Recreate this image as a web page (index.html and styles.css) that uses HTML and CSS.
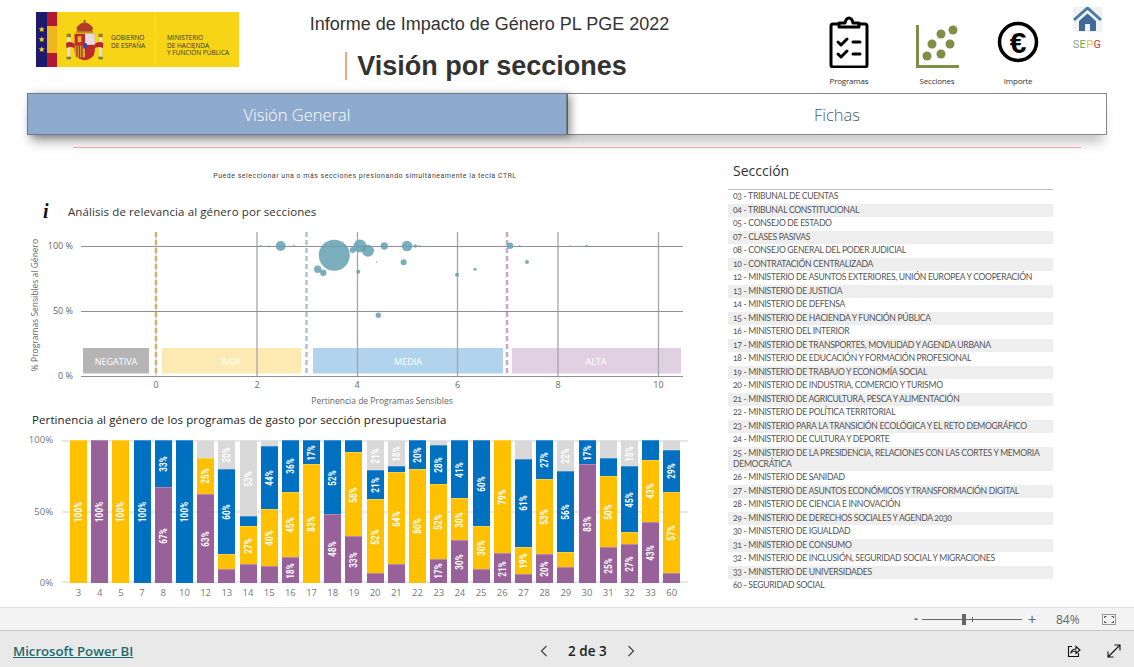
FILE: index.html
```html
<!DOCTYPE html>
<html lang="es">
<head>
    <meta charset="UTF-8">
    <title>Vision por secciones</title>
    <link rel="stylesheet" href="styles.css">
</head>
<body>
<div class="report">
    <header class="top">
        <div class="logo">
            <div class="logo-flag"><span class="star">★</span><span class="star">★</span><span class="star">★</span></div>
            <div class="logo-band"></div>
            <svg class="crest" viewBox="0 0 62 48" width="38" height="41" preserveAspectRatio="none">
                <rect x="2" y="20" width="5" height="24" fill="#ddd"/><rect x="1" y="16" width="7" height="4" fill="#9a7b22"/><rect x="1" y="43" width="7" height="3" fill="#6f7d3b"/>
                <rect x="54" y="20" width="5" height="24" fill="#ddd"/><rect x="53" y="16" width="7" height="4" fill="#9a7b22"/><rect x="53" y="43" width="7" height="3" fill="#6f7d3b"/>
                <path d="M0 27 q8 -3 14 1 l0 5 q-7 -3 -13 0z M61 27 q-8 -3 -14 1 l0 5 q7 -3 13 0z" fill="#b3262a"/>
                <path d="M17 9 q13 -12 27 0 l-2 5 h-23z" fill="#b5392b"/>
                <rect x="29" y="0" width="3" height="5" fill="#7d6a1e"/>
                <rect x="17" y="13" width="27" height="2" fill="#a6861f"/>
                <path d="M14 16 h33 v20 q-1 10 -16.500 11 q-15.500 -1 -16.500 -11z" fill="#c0282d"/>
                <rect x="31" y="16" width="16" height="13" fill="#e7dbe0"/>
                <rect x="15" y="30" width="16" height="14" fill="#d9a52a"/>
                <path d="M18 30 v13 M22 30 v15 M26 30 v15" stroke="#b3262a" stroke-width="2"/>
                <circle cx="31" cy="30" r="3.500" fill="#2a4f9e"/>
                <rect x="19" y="19" width="6" height="7" fill="#e2b736"/>
            </svg>
            <div class="logo-text gob">GOBIERNO<br>DE ESPAÑA</div>
            <div class="logo-text min">MINISTERIO<br>DE HACIENDA<br>Y FUNCIÓN PÚBLICA</div>
        </div>
        <div class="titles">
            <div class="title-sub">Informe de Impacto de Género PL PGE 2022</div>
            <h1 class="title-main">Visión por secciones</h1>
        </div>
        <nav class="nav">
            <div class="nav-item item-prog">
                <svg viewBox="0 0 40 52" width="40" height="52" fill="none" stroke="#000" stroke-width="3" stroke-linejoin="round" stroke-linecap="round">
                    <path d="M10 8 H4 Q2 8 2 10 V49 Q2 51 4 51 H36 Q38 51 38 49 V10 Q38 8 36 8 H30"/>
                    <path d="M10 11 V7 H16 Q17 2 20 2 Q23 2 24 7 H30 V11z"/>
                    <path d="M9 26 l3 3 l6 -6 M9 38 l3 3 l6 -6"/>
                    <path d="M24 26 H31 M24 38 H31"/>
                </svg>
                <span>Programas</span>
            </div>
            <div class="nav-item item-sec">
                <svg viewBox="0 0 44 52" width="44" height="52" fill="#7f8f47">
                    <path d="M1 9 H4 V49 H44 V52 H1z"/>
                    <circle cx="38" cy="14" r="4.500"/><circle cx="26" cy="18" r="4.500"/><circle cx="35" cy="28" r="4.500"/>
                    <circle cx="17" cy="28" r="4.500"/><circle cx="26" cy="38" r="4.500"/><circle cx="12" cy="40" r="4.500"/>
                </svg>
                <span>Secciones</span>
            </div>
            <div class="nav-item item-eur">
                <svg viewBox="0 0 44 52" width="44" height="52">
                    <circle cx="22" cy="26" r="18.500" fill="none" stroke="#000" stroke-width="3.500"/>
                    <text x="22" y="36.500" text-anchor="middle" class="euro">€</text>
                </svg>
                <span>Importe</span>
            </div>
            <div class="nav-item item-home">
                <svg viewBox="0 0 29 25" width="29" height="25">
                    <rect width="29" height="25" fill="#f1f1f1"/>
                    <path d="M1 13 L14.500 1 L28 13" fill="none" stroke="#4a7aa8" stroke-width="3"/>
                    <path d="M6 14 L14.500 6.500 L23 14 V24 H17 V17 H12 V24 H6z" fill="#3f6a9a"/>
                </svg>
                <span class="sepg"><i class="s">S</i><i class="e">E</i><i class="p">P</i><i class="g">G</i></span>
            </div>
        </nav>
    </header>

    <div class="tabs">
        <div class="tab tab-on">Visión General</div>
        <div class="tab">Fichas</div>
    </div>
    <div class="rule"></div>

    <main class="main">
        <section class="left">
            <p class="note">Puede seleccionar una o más secciones presionando simultáneamente la tecla CTRL</p>
            <div class="chart-title"><span class="info">i</span><span>Análisis de relevancia al género por secciones</span></div>

            <svg class="scatter" viewBox="20 225 670 185" width="670" height="185">
                <!-- bands -->
                <rect x="83" y="348" width="66" height="25.500" fill="#b5b5b5"/>
                <rect x="162" y="348" width="139" height="25.500" fill="#fdeab2"/>
                <rect x="313" y="348" width="190" height="25.500" fill="#b2d3ee"/>
                <rect x="512" y="348" width="169" height="25.500" fill="#e1d0e3"/>
                <!-- grid -->
                <g stroke="#a6a6a6" stroke-width="1.300">
                    <path d="M257 232V376M357.500 232V376M457.500 232V376M558 232V376M658.500 232V376"/>
                </g>
                <g stroke="#8f8f8f" stroke-width="1">
                    <path d="M81 246.500H683M81 311.500H683M81 376.500H683"/>
                </g>
                <path d="M156 232V376" stroke="#e7b84e" stroke-width="2.500" stroke-dasharray="5 3"/>
                <path d="M156 232V376" stroke="#a6a6a6" stroke-width="0.700"/>
                <path d="M306.500 232V376" stroke="#a9c0df" stroke-width="2.500" stroke-dasharray="5 3"/>
                <path d="M507 232V376" stroke="#c9a6cc" stroke-width="2.500" stroke-dasharray="5 3"/>
                <!-- bubbles -->
                <g fill="#64a0b0" fill-opacity="0.85">
                    <circle cx="261" cy="246" r="1"/><circle cx="269" cy="246" r="0.800"/><circle cx="280.700" cy="246" r="5"/><circle cx="294" cy="246" r="1"/>
                    <circle cx="334.300" cy="255.300" r="15.500"/><circle cx="317.700" cy="269.300" r="3.700"/><circle cx="323.300" cy="272.700" r="3.200"/>
                    <circle cx="352.700" cy="250" r="3"/><circle cx="358.300" cy="271.700" r="2"/><circle cx="360" cy="246" r="6.500"/><circle cx="368" cy="250.700" r="6"/>
                    <circle cx="384.300" cy="246" r="3.700"/><circle cx="407" cy="246" r="5.300"/><circle cx="415.300" cy="246" r="1.800"/><circle cx="419.300" cy="246" r="1"/>
                    <circle cx="376.700" cy="262" r="0.800"/><circle cx="403.700" cy="262.300" r="3"/><circle cx="457" cy="274.700" r="2"/><circle cx="475" cy="269.300" r="1.500"/>
                    <circle cx="378.300" cy="315.300" r="2.700"/><circle cx="510" cy="245.700" r="3.300"/><circle cx="519.700" cy="246" r="1"/><circle cx="527" cy="262" r="2"/>
                    <circle cx="570" cy="246" r="0.800"/><circle cx="586.700" cy="246" r="1.200"/>
                </g>
                <g class="band-label" text-anchor="middle">
                    <text x="116" y="365">NEGATIVA</text><text x="231" y="365">BAJA</text><text x="408" y="365">MEDIA</text><text x="596" y="365">ALTA</text>
                </g>
                <g class="axis-label" text-anchor="end">
                    <text x="73" y="249">100 %</text><text x="73" y="314">50 %</text><text x="73" y="379">0 %</text>
                </g>
                <g class="axis-label" text-anchor="middle">
                    <text x="156" y="388">0</text><text x="257" y="388">2</text><text x="357" y="388">4</text><text x="457.500" y="388">6</text><text x="558" y="388">8</text><text x="658.500" y="388">10</text>
                    <text class="axis-title" x="382" y="404">Pertinencia de Programas Sensibles</text>
                    <text class="axis-title" transform="translate(38 305) rotate(-90)">% Programas Sensibles al Género</text>
                </g>
            </svg>

            <div class="chart-title bars-title">Pertinencia al género de los programas de gasto por sección presupuestaria</div>
            <div class="bars-wrap">
                <div class="y-axis"><span>100%</span><span>50%</span><span>0%</span></div>
                <div>
                    <div class="plot">
                        <div class="bar"><div class="seg ye" style="height:100%"><span>100%</span></div></div>
                        <div class="bar"><div class="seg pu" style="height:100%"><span>100%</span></div></div>
                        <div class="bar"><div class="seg ye" style="height:100%"><span>100%</span></div></div>
                        <div class="bar"><div class="seg bl" style="height:100%"><span>100%</span></div></div>
                        <div class="bar"><div class="seg pu" style="height:67%"><span>67%</span></div><div class="seg bl" style="height:33%"><span>33%</span></div></div>
                        <div class="bar"><div class="seg bl" style="height:100%"><span>100%</span></div></div>
                        <div class="bar"><div class="seg pu" style="height:62.500%"><span>63%</span></div><div class="seg ye" style="height:25%"><span>25%</span></div><div class="seg gr" style="height:12.500%"></div></div>
                        <div class="bar"><div class="seg pu" style="height:10%"></div><div class="seg ye" style="height:10%"></div><div class="seg bl" style="height:60%"><span>60%</span></div><div class="seg gr" style="height:20%"><span>20%</span></div></div>
                        <div class="bar"><div class="seg pu" style="height:13%"></div><div class="seg ye" style="height:27%"><span>27%</span></div><div class="seg bl" style="height:7%"></div><div class="seg gr" style="height:53%"><span>53%</span></div></div>
                        <div class="bar"><div class="seg pu" style="height:12%"></div><div class="seg ye" style="height:40%"><span>40%</span></div><div class="seg bl" style="height:44%"><span>44%</span></div><div class="seg gr" style="height:4%"></div></div>
                        <div class="bar"><div class="seg pu" style="height:18%"><span>18%</span></div><div class="seg ye" style="height:46%"><span>45%</span></div><div class="seg bl" style="height:36%"><span>36%</span></div></div>
                        <div class="bar"><div class="seg ye" style="height:83%"><span>83%</span></div><div class="seg bl" style="height:17%"><span>17%</span></div></div>
                        <div class="bar"><div class="seg pu" style="height:48%"><span>48%</span></div><div class="seg bl" style="height:52%"><span>52%</span></div></div>
                        <div class="bar"><div class="seg pu" style="height:33%"><span>33%</span></div><div class="seg ye" style="height:58.500%"><span>58%</span></div><div class="seg bl" style="height:8.500%"></div></div>
                        <div class="bar"><div class="seg pu" style="height:7%"></div><div class="seg ye" style="height:51.500%"><span>52%</span></div><div class="seg bl" style="height:20.500%"><span>21%</span></div><div class="seg gr" style="height:21%"><span>21%</span></div></div>
                        <div class="bar"><div class="seg pu" style="height:13.500%"></div><div class="seg ye" style="height:64%"><span>64%</span></div><div class="seg bl" style="height:4.500%"></div><div class="seg gr" style="height:18%"><span>18%</span></div></div>
                        <div class="bar"><div class="seg ye" style="height:80%"><span>80%</span></div><div class="seg bl" style="height:20%"><span>20%</span></div></div>
                        <div class="bar"><div class="seg pu" style="height:17%"><span>17%</span></div><div class="seg ye" style="height:52%"><span>52%</span></div><div class="seg bl" style="height:27.500%"><span>28%</span></div><div class="seg gr" style="height:3.500%"></div></div>
                        <div class="bar"><div class="seg pu" style="height:30%"><span>30%</span></div><div class="seg ye" style="height:29.500%"><span>30%</span></div><div class="seg bl" style="height:40.500%"><span>41%</span></div></div>
                        <div class="bar"><div class="seg pu" style="height:10%"></div><div class="seg ye" style="height:30%"><span>30%</span></div><div class="seg bl" style="height:60%"><span>60%</span></div></div>
                        <div class="bar"><div class="seg pu" style="height:21%"><span>21%</span></div><div class="seg ye" style="height:79%"><span>79%</span></div></div>
                        <div class="bar"><div class="seg pu" style="height:6%"></div><div class="seg ye" style="height:19.500%"><span>19%</span></div><div class="seg bl" style="height:61.500%"><span>61%</span></div><div class="seg gr" style="height:13%"></div></div>
                        <div class="bar"><div class="seg pu" style="height:20%"><span>20%</span></div><div class="seg ye" style="height:53%"><span>53%</span></div><div class="seg bl" style="height:27%"><span>27%</span></div></div>
                        <div class="bar"><div class="seg pu" style="height:11%"></div><div class="seg ye" style="height:11%"></div><div class="seg bl" style="height:56%"><span>56%</span></div><div class="seg gr" style="height:22%"><span>22%</span></div></div>
                        <div class="bar"><div class="seg pu" style="height:83%"><span>83%</span></div><div class="seg bl" style="height:17%"><span>17%</span></div></div>
                        <div class="bar"><div class="seg pu" style="height:25%"><span>25%</span></div><div class="seg ye" style="height:50%"><span>50%</span></div><div class="seg bl" style="height:12.500%"></div><div class="seg gr" style="height:12.500%"></div></div>
                        <div class="bar"><div class="seg pu" style="height:27%"><span>27%</span></div><div class="seg ye" style="height:9%"></div><div class="seg bl" style="height:45.500%"><span>45%</span></div><div class="seg gr" style="height:18.500%"><span>18%</span></div></div>
                        <div class="bar"><div class="seg pu" style="height:43%"><span>43%</span></div><div class="seg ye" style="height:43%"><span>43%</span></div><div class="seg bl" style="height:14%"></div></div>
                        <div class="bar"><div class="seg pu" style="height:7%"></div><div class="seg ye" style="height:57%"><span>57%</span></div><div class="seg bl" style="height:29%"><span>29%</span></div><div class="seg gr" style="height:7%"></div></div>
                    </div>
                    <div class="x-axis">
                        <span>3</span><span>4</span><span>5</span><span>7</span><span>8</span><span>10</span><span>12</span><span>13</span><span>14</span><span>15</span><span>16</span><span>17</span><span>18</span><span>19</span><span>20</span><span>21</span><span>22</span><span>23</span><span>24</span><span>25</span><span>26</span><span>27</span><span>28</span><span>29</span><span>30</span><span>31</span><span>32</span><span>33</span><span>60</span>
                    </div>
                </div>
            </div>
        </section>

        <aside class="slicer">
            <h2>Seccción</h2>
            <ul class="list">
                <li>03 - TRIBUNAL DE CUENTAS</li>
                <li>04 - TRIBUNAL CONSTITUCIONAL</li>
                <li>05 - CONSEJO DE ESTADO</li>
                <li>07 - CLASES PASIVAS</li>
                <li>08 - CONSEJO GENERAL DEL PODER JUDICIAL</li>
                <li>10 - CONTRATACIÓN CENTRALIZADA</li>
                <li>12 - MINISTERIO DE ASUNTOS EXTERIORES, UNIÓN EUROPEA Y COOPERACIÓN</li>
                <li>13 - MINISTERIO DE JUSTICIA</li>
                <li>14 - MINISTERIO DE DEFENSA</li>
                <li>15 - MINISTERIO DE HACIENDA Y FUNCIÓN PÚBLICA</li>
                <li>16 - MINISTERIO DEL INTERIOR</li>
                <li>17 - MINISTERIO DE TRANSPORTES, MOVILIDAD Y AGENDA URBANA</li>
                <li>18 - MINISTERIO DE EDUCACIÓN Y FORMACIÓN PROFESIONAL</li>
                <li>19 - MINISTERIO DE TRABAJO Y ECONOMÍA SOCIAL</li>
                <li>20 - MINISTERIO DE INDUSTRIA, COMERCIO Y TURISMO</li>
                <li>21 - MINISTERIO DE AGRICULTURA, PESCA Y ALIMENTACIÓN</li>
                <li>22 - MINISTERIO DE POLÍTICA TERRITORIAL</li>
                <li>23 - MINISTERIO PARA LA TRANSICIÓN ECOLÓGICA Y EL RETO DEMOGRÁFICO</li>
                <li>24 - MINISTERIO DE CULTURA Y DEPORTE</li>
                <li>25 - MINISTERIO DE LA PRESIDENCIA, RELACIONES CON LAS CORTES Y MEMORIA DEMOCRÁTICA</li>
                <li>26 - MINISTERIO DE SANIDAD</li>
                <li>27 - MINISTERIO DE ASUNTOS ECONÓMICOS Y TRANSFORMACIÓN DIGITAL</li>
                <li>28 - MINISTERIO DE CIENCIA E INNOVACIÓN</li>
                <li>29 - MINISTERIO DE DERECHOS SOCIALES Y AGENDA 2030</li>
                <li>30 - MINISTERIO DE IGUALDAD</li>
                <li>31 - MINISTERIO DE CONSUMO</li>
                <li>32 - MINISTERIO DE INCLUSIÓN, SEGURIDAD SOCIAL Y MIGRACIONES</li>
                <li>33 - MINISTERIO DE UNIVERSIDADES</li>
                <li>60 - SEGURIDAD SOCIAL</li>
            </ul>
        </aside>
    </main>
</div>

<div class="status">
    <span class="zoom-sign">-</span>
    <div class="slider"><i class="thumb"></i><i class="tick"></i></div>
    <span class="zoom-sign plus">+</span>
    <span class="zoom-val">84%</span>
    <svg class="fit" viewBox="0 0 14 11" width="14" height="11" fill="none" stroke="#555">
        <rect x="0.500" y="0.500" width="13" height="10" stroke="#999"/>
        <path d="M2.500 4V2.500H4.500M9.500 2.500H11.500V4M11.500 7V8.500H9.500M4.500 8.500H2.500V7"/>
    </svg>
</div>

<footer class="footer">
    <a class="pbi">Microsoft Power BI</a>
    <div class="pager">
        <svg viewBox="0 0 8 12" width="8" height="12" fill="none" stroke="#444" stroke-width="1.200"><path d="M6.500 1L1.500 6L6.500 11"/></svg>
        <span>2 de 3</span>
        <svg viewBox="0 0 8 12" width="8" height="12" fill="none" stroke="#444" stroke-width="1.200"><path d="M1.500 1L6.500 6L1.500 11"/></svg>
    </div>
    <div class="actions">
        <svg viewBox="0 0 14 14" width="14" height="14" fill="none" stroke="#111" stroke-width="1.100">
            <path d="M5 2.500H1.500V12.500H11.500V9"/>
            <path d="M4 8.500Q5 5 9 5V2.500L13 6L9 9.500V7Q6 7 4 8.500z"/>
        </svg>
        <svg viewBox="0 0 14 14" width="14" height="14" fill="none" stroke="#111" stroke-width="1.100">
            <path d="M1 13L13 1M7.500 1H13V6.500M1 7.500V13H6.500"/>
        </svg>
    </div>
</footer>
</body>
</html>
```
FILE: styles.css
```css
* { box-sizing: border-box; }
html, body { margin: 0; height: 667px; overflow: hidden; background: #fff; }
body { width: 1134px; font-family: "Open Sans", sans-serif; color: #333; }

.report { height: 607px; overflow: hidden; }

/* header */
.top { display: flex; height: 93px; }
.logo {
    display: flex;
    width: 203px;
    height: 55px;
    margin: 12px 0 0 36px;
    background: #f8d416;
    flex: none;
}
.logo-flag {
    width: 11px;
    background: #1c1a6e;
    display: flex;
    flex-direction: column;
    align-items: center;
    justify-content: center;
    gap: 1px;
}
.star { color: #f8d416; font-size: 8px; line-height: 9px; font-family: "DejaVu Sans", sans-serif; }
.logo-band { width: 10px; background: linear-gradient(#b4182f 25%, #eeb51e 25%, #eeb51e 75%, #b4182f 75%); }
.crest { margin: 8px 0 0 9px; flex: none; }
.logo-text { font-family: "Open Sans", sans-serif; font-size: 6.5px; line-height: 7.500px; color: #333; }
.gob { padding-top: 22px; margin-left: 7px; width: 44px; }
.min { padding: 22px 0 0 11px; border-left: 1px solid #f5dc55; white-space: nowrap; }

.titles { width: 501px; flex: none; text-align: center; font-family: "Liberation Sans", sans-serif; }
.title-sub { font-size: 18px; line-height: 20px; margin-top: 14px; color: #333; }
.title-main {
    display: inline-block;
    margin: 18px 0 0 -7px;
    padding-left: 10px;
    border-left: 2px solid #f4a47a;
    font-size: 27px;
    line-height: 28px;
    font-weight: bold;
    color: #333;
}

.nav { display: flex; margin-left: 79px; }
.nav-item { width: 60px; display: flex; flex-direction: column; align-items: center; padding-top: 16px; font-size: 8px; color: #333; }
.nav-item span { margin-top: 7px; line-height: 12px; white-space: nowrap; letter-spacing: -0.2px; }
.item-sec { margin-left: 28px; }
.item-eur { margin-left: 21px; }
.item-home { margin-left: 9px; padding-top: 7px; }
.euro { font: bold 30px "Liberation Sans", sans-serif; fill: #000; }
.item-home .sepg { margin-top: 7px; font-size: 11px; letter-spacing: 0.3px; font-family: "Roboto", sans-serif; }
.sepg i { font-style: normal; }
.sepg .s { color: #999; }
.sepg .e { color: #5bb04c; }
.sepg .p { color: #e3c23a; }
.sepg .g { color: #c9363c; }

/* tabs */
.tabs {
    display: flex;
    width: 1080px;
    height: 42px;
    margin-left: 27px;
    box-shadow: 0 12px 12px -4px rgba(0, 0, 0, 0.22);
}
.tab {
    flex: 1;
    display: flex;
    align-items: center;
    justify-content: center;
    padding-top: 1px;
    background: #fff;
    border: 1px solid #888;
    font-size: 16.500px;
    font-weight: 300;
    color: #4a5a75;
}
.tab-on {
    background: #8eaace;
    color: #fff;
    border-color: #6d7a8a;
    box-shadow: 4px 2px 8px rgba(0, 0, 0, 0.4);
    position: relative;
}
.rule { height: 1px; margin: 12px 53px 0 73px; background: #f0a8a8; position: relative; }

/* main */
.main { display: flex; height: 458px; }
.left { width: 708px; flex: none; padding-left: 20px; }
.note { margin: 22px 0 0; width: 690px; text-align: center; font-size: 7px; line-height: 12px; color: #444; font-family: "Roboto", sans-serif; letter-spacing: 0.5px; }
.chart-title { display: flex; align-items: center; font-size: 11.500px; color: #333; letter-spacing: 0.1px; }
.chart-title { height: 20px; margin: 20px 0 0 23px; padding-bottom: 2px; }
.info { width: 25px; font: italic bold 20px "Liberation Serif", serif; color: #111; }
.scatter { display: block; margin-top: 3px; }
.axis-label { font-size: 9px; fill: #666; }
.axis-title { font-size: 8.500px; }
.band-label { font-size: 9px; fill: #fff; }

.bars-title { margin: 0 0 0 12px; height: 20px; color: #222; }
.bars-wrap { display: flex; margin-top: 10px; }
.y-axis {
    width: 33px;
    height: 155px;
    margin: -6px 9px 0 0;
    display: flex;
    flex-direction: column;
    justify-content: space-between;
    align-items: flex-end;
    font-size: 9.500px;
    line-height: 12px;
    color: #777;
}
.plot {
    display: flex;
    gap: 4.190px;
    width: 626px;
    height: 143px;
    padding-left: 8px;
    background:
        linear-gradient(#e8e8e8, #e8e8e8) 0 0 / 100% 2px no-repeat,
        linear-gradient(#e8e8e8, #e8e8e8) 0 50% / 100% 2px no-repeat,
        linear-gradient(#e8e8e8, #e8e8e8) 0 100% / 100% 2px no-repeat;
}
.bar { width: 17px; height: 100%; flex: none; display: flex; flex-direction: column-reverse; }
.seg {
    display: flex;
    align-items: center;
    justify-content: center;
    border-top: 1px solid rgba(255, 255, 255, 0.25);
    overflow: hidden;
}
/* the labels are a narrow font in the original, so squeeze them along the text */
.seg span {
    writing-mode: vertical-rl;
    transform: rotate(180deg) scaleY(0.8);
    font-family: "Roboto", sans-serif;
    font-size: 10px;
    font-weight: 700;
    color: #fff;
    white-space: nowrap;
    letter-spacing: 0.3px;
}
.ye { background: #ffc000; }
.pu { background: #996199; }
.bl { background: #0070c0; }
.gr { background: #d9d9d9; }
.x-axis { display: flex; gap: 4.190px; padding: 3px 0 0 8px; font-size: 9.500px; line-height: 13px; color: #777; }
.x-axis span { width: 17px; flex: none; text-align: center; }

/* slicer */
.slicer { width: 325px; margin-left: 20px; }
.slicer h2 { margin: 14px 0 0 5px; height: 27px; font-size: 14px; line-height: 18px; font-weight: 400; color: #333; }
.list { margin: 0; padding: 0; list-style: none; border-top: 1px solid #bbb; font-family: "Lato", sans-serif; font-size: 8.600px; line-height: 11px; letter-spacing: -0.3px; color: #555; font-variant-numeric: oldstyle-nums; }
.list li { padding: 1.250px 5px; }
.list li:nth-child(even) { background: #eeeeee; }

/* status bar */
.status {
    display: flex;
    align-items: center;
    height: 24px;
    padding-left: 910px;
    background: #f3f3f3;
    border-top: 1px solid #e1e1e1;
    border-bottom: 1px solid #c9c9c9;
    color: #666;
}
.zoom-sign { width: 12px; font: bold 12px "Liberation Sans", sans-serif; text-align: center; }
.plus { margin-left: 4px; font-size: 14px; font-weight: 400; }
.slider { width: 100px; height: 1px; background: #666; position: relative; }
.thumb { position: absolute; left: 40px; top: -5px; width: 4px; height: 11px; background: #666; }
.tick { position: absolute; left: 50px; top: -2px; width: 1px; height: 5px; background: #666; }
.zoom-val { margin-left: 18px; font-size: 12px; }
.fit { margin-left: 22px; }

/* footer */
.footer {
    display: flex;
    align-items: center;
    height: 36px;
    padding: 3px 0 0 13px;
    background: #e9e9e9;
}
.pbi { width: 527px; flex: none; font-size: 13.200px; font-weight: 600; color: #1a6b6f; text-decoration: underline; }
.pager { display: flex; flex: none; align-items: center; gap: 20px; font-size: 13.500px; font-weight: 600; color: #222; white-space: nowrap; }
.actions { display: flex; flex: none; gap: 26px; margin-left: 432px; }
```
